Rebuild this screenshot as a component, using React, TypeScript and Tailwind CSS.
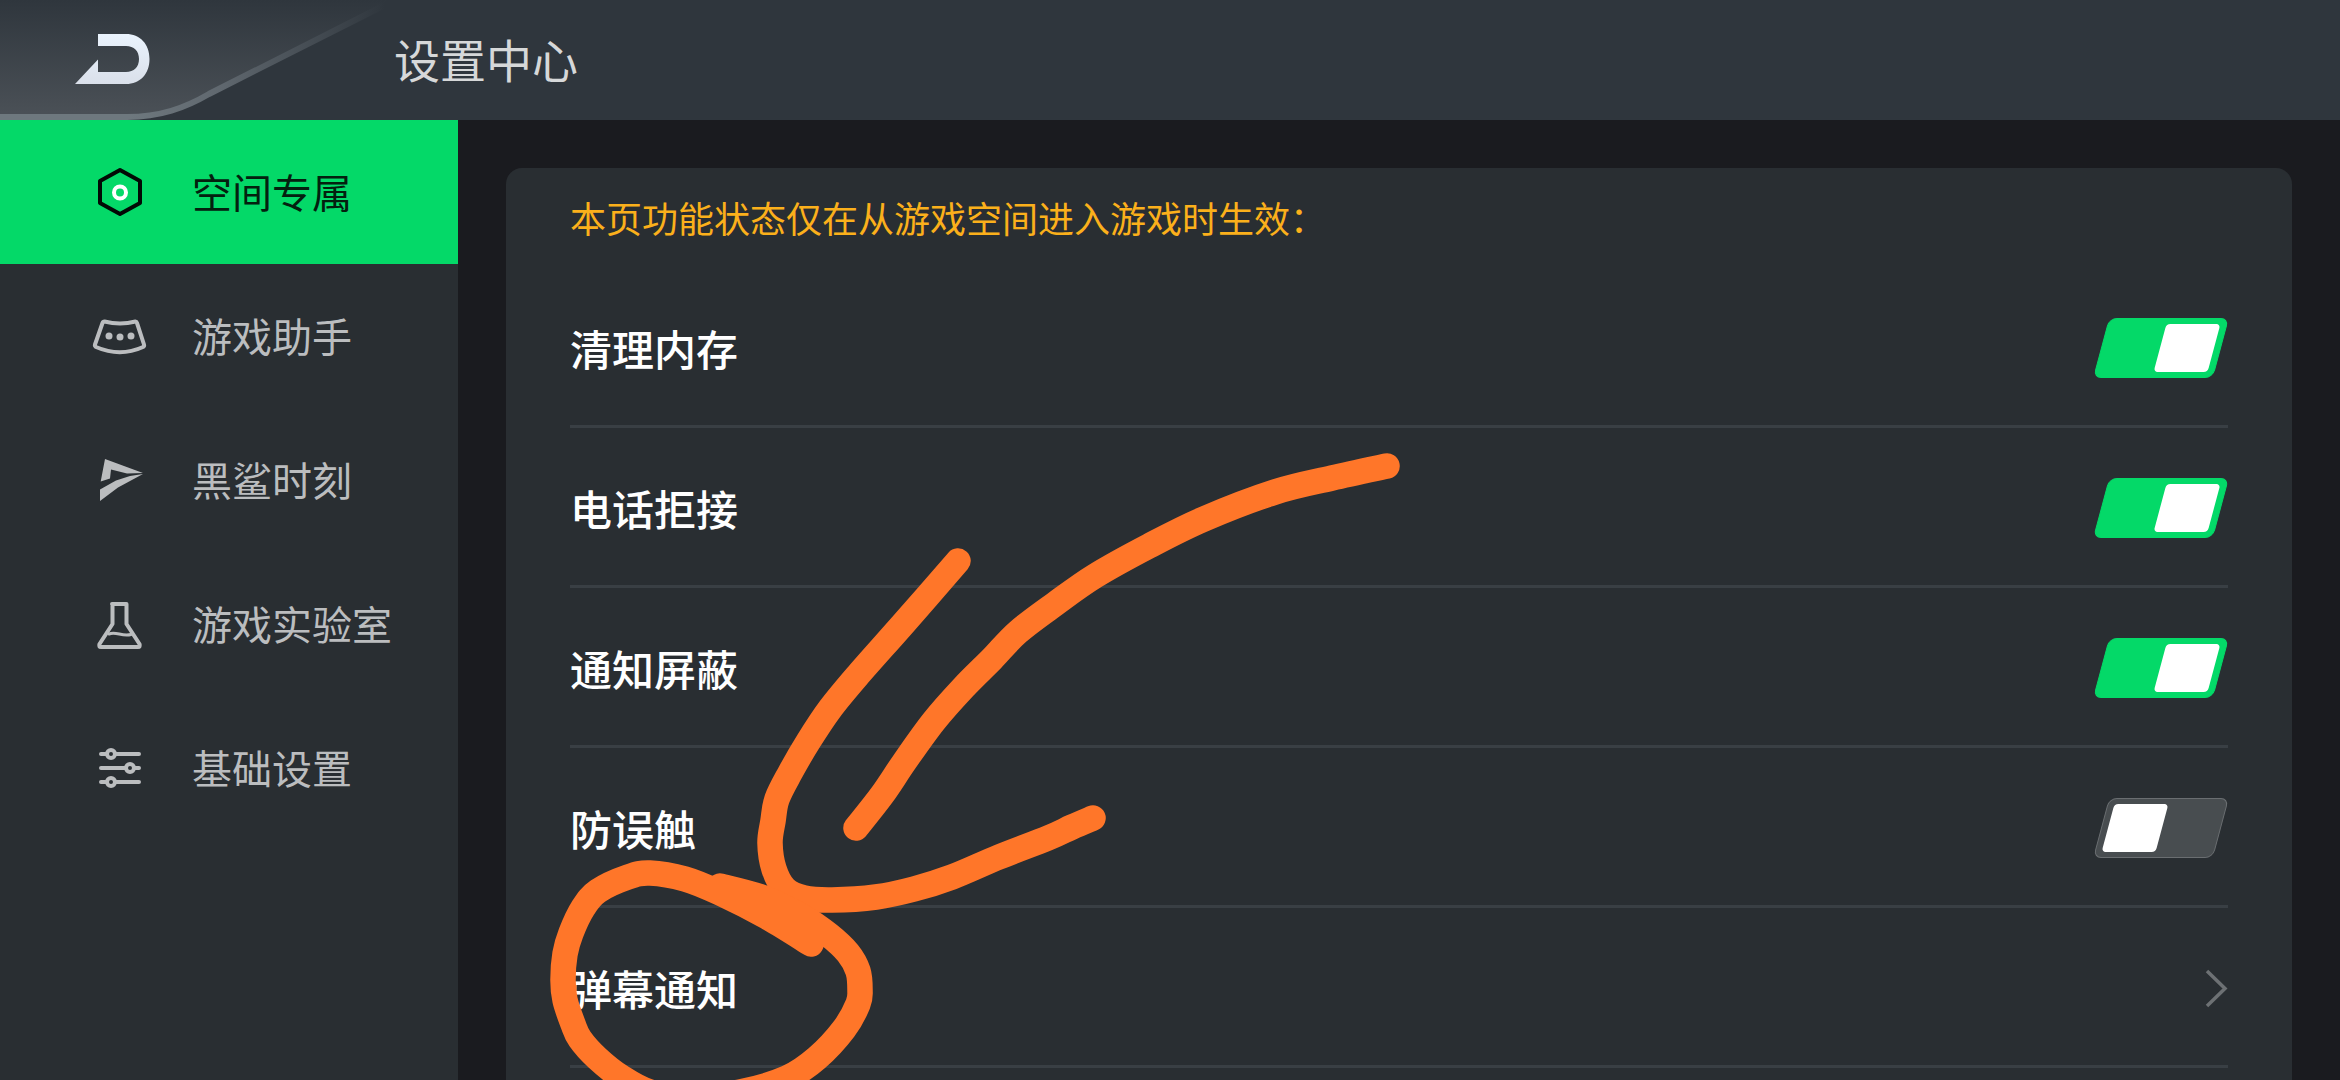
import { useState } from "react";
import type { ReactNode } from "react";

function LogoMark() {
  return (
    <svg className="block h-[120px] w-[394px]" viewBox="0 0 394 120" fill="none" aria-hidden="true">
      <defs>
        <linearGradient id="tab" x1="0" y1="0" x2="0" y2="1">
          <stop offset="0" stopColor="#2f363d" />
          <stop offset="1" stopColor="#4b5157" />
        </linearGradient>
        <linearGradient id="edge" gradientUnits="userSpaceOnUse" x1="130" y1="0" x2="385" y2="0">
          <stop offset="0" stopColor="#6e787e" />
          <stop offset="0.35" stopColor="#60686f" />
          <stop offset="1" stopColor="#2f363d" />
        </linearGradient>
        <linearGradient id="mark" x1="0" y1="0" x2="0" y2="1">
          <stop offset="0" stopColor="#eaf3fd" />
          <stop offset="1" stopColor="#dae0ea" />
        </linearGradient>
      </defs>
      <path d="M0 0H390L209 92C185 108 160 117 127 117H0Z" fill="url(#tab)" />
      <path d="M0 117H127C160 117 185 108 209 94L385 5" stroke="url(#edge)" strokeWidth="6" />
      <path
        d="M98 34H126C140 34 149.5 44 149.5 59S140 84 126 84H75L98 59.5V72H126C134 72 139 67 139 59S134 46 126 46H98Z"
        fill="url(#mark)"
      />
    </svg>
  );
}

function HexIcon() {
  return (
    <svg className="size-14" viewBox="0 0 56 56" fill="none" aria-hidden="true">
      <path d="M28 6L48 17V39L28 50L8 39V17Z" stroke="#020a05" strokeWidth="4" strokeLinejoin="round" />
      <circle cx="28" cy="28.500" r="6" stroke="#fff" strokeWidth="4" />
    </svg>
  );
}

function HelperIcon() {
  return (
    <svg className="size-14" viewBox="0 0 56 56" fill="none" aria-hidden="true">
      <path
        d="M12.500 13.500Q28 17.500 43.500 13.500Q44.500 13.500 45 15L52 36.500Q52.500 38 51 39Q28 49.500 4 39Q2.500 38 3 36.500L10.500 15Q11 13.500 12.500 13.500Z"
        stroke="currentColor"
        strokeWidth="4"
        strokeLinejoin="round"
      />
      <circle cx="17" cy="28" r="3.500" fill="currentColor" />
      <circle cx="28" cy="29" r="3.500" fill="currentColor" />
      <circle cx="39" cy="28" r="3.500" fill="currentColor" />
    </svg>
  );
}

function MomentIcon() {
  return (
    <svg className="size-14" viewBox="0 0 56 56" fill="currentColor" aria-hidden="true">
      <path d="M13 7L51 21L35 21.500L19 17.500L18 26.500L8.700 29.500Z" />
      <path d="M51 22L26 35.500L8 49V37.500L24 28.500L38 24Z" />
    </svg>
  );
}

function LabIcon() {
  return (
    <svg
      className="size-14"
      viewBox="0 0 56 56"
      fill="none"
      stroke="currentColor"
      strokeWidth="4"
      strokeLinecap="round"
      strokeLinejoin="round"
      aria-hidden="true"
    >
      <path d="M20 8H34.500V28L47.500 48Q48.500 51 46 51H9Q6.500 51 7.500 48L20.500 28V8" />
      <path d="M17 38C24 35 30 41 39 38.500" strokeWidth="3" />
    </svg>
  );
}

function SlidersIcon() {
  return (
    <svg
      className="size-14"
      viewBox="0 0 56 56"
      fill="none"
      stroke="currentColor"
      strokeWidth="4"
      strokeLinecap="round"
      aria-hidden="true"
    >
      <path d="M9 14H14M24 14H47M9 28H33M43 28H47M9 42H14M24 42H47" />
      <circle cx="19" cy="14" r="4" />
      <circle cx="38" cy="28" r="4" />
      <circle cx="19" cy="42" r="4" />
    </svg>
  );
}

const sections: { label: string; icon: ReactNode }[] = [
  { label: "空间专属", icon: <HexIcon /> },
  { label: "游戏助手", icon: <HelperIcon /> },
  { label: "黑鲨时刻", icon: <MomentIcon /> },
  { label: "游戏实验室", icon: <LabIcon /> },
  { label: "基础设置", icon: <SlidersIcon /> },
];

function SwitchRow({ label, initial }: { label: string; initial: boolean }) {
  const [on, setOn] = useState(initial);
  return (
    <label className="flex h-40 cursor-pointer items-center justify-between border-b-[3px] border-[#393f44] pt-[3px]">
      <span>{label}</span>
      <span className="relative block h-[60px] w-[134px] px-[7px]">
        <input
          type="checkbox"
          role="switch"
          className="peer sr-only"
          checked={on}
          onChange={(e) => setOn(e.target.checked)}
        />
        <span className="flex h-full -skew-x-15 items-center justify-start rounded-lg border border-[#6a6e71] bg-[#484d50] px-[6px] peer-checked:justify-end peer-checked:border-[#04d968] peer-checked:bg-[#04d968]">
          <span className="h-12 w-[54px] rounded bg-white" />
        </span>
      </span>
    </label>
  );
}

type Point = [number, number];

// Joins hand-drawn sample points with Catmull-Rom segments.
function smooth(points: Point[]) {
  let d = `M${points[0][0]} ${points[0][1]}`;
  for (let i = 0; i < points.length - 1; i++) {
    const p0 = points[Math.max(i - 1, 0)];
    const p1 = points[i];
    const p2 = points[i + 1];
    const p3 = points[Math.min(i + 2, points.length - 1)];
    d += `C${p1[0] + (p2[0] - p0[0]) / 6} ${p1[1] + (p2[1] - p0[1]) / 6} ${p2[0] - (p3[0] - p1[0]) / 6} ${p2[1] - (p3[1] - p1[1]) / 6} ${p2[0]} ${p2[1]}`;
  }
  return d;
}

const strokes: Point[][] = [
  [
    [1387, 466], [1332, 478], [1275, 492], [1204, 519], [1149, 546], [1095, 576], [1055, 604],
    [1018, 632], [992, 659], [964, 687], [934, 721], [905, 761], [882, 795], [856, 828],
  ],
  [
    [958, 561], [904, 623], [858, 675], [830, 709], [808, 742], [790, 773], [777, 799],
    [773, 821], [770, 843], [774, 869], [785, 889], [804, 898], [832, 900], [876, 897],
    [914, 889], [952, 877], [999, 857], [1048, 838], [1072, 827], [1093, 818],
  ],
  [
    [811, 944], [767, 917], [720, 893], [685, 879], [650, 873], [628, 877], [598, 891],
    [583, 908], [571, 933], [565, 954], [563, 980], [565, 1000], [573, 1024], [580, 1039],
    [597, 1058], [621, 1077], [650, 1092], [690, 1097], [740, 1092], [787, 1078],
    [817, 1058], [844, 1029], [858, 1004], [860, 990], [858, 971], [848, 953],
    [829, 935], [803, 917], [764, 898], [720, 886],
  ],
];

function Scribble() {
  return (
    <svg
      className="pointer-events-none absolute top-0 left-0 h-[1080px] w-[2340px]"
      viewBox="0 0 2340 1080"
      fill="none"
      stroke="#ff7629"
      strokeWidth="25.500"
      strokeLinecap="round"
      strokeLinejoin="round"
      aria-hidden="true"
    >
      {strokes.map((points, i) => (
        <path key={i} d={smooth(points)} />
      ))}
    </svg>
  );
}

export default function App() {
  const [active, setActive] = useState(0);
  return (
    <div className="relative flex h-screen min-h-[720px] flex-col overflow-hidden bg-[#1a1b1f] font-['Noto_Sans_CJK_SC',sans-serif] text-white">
      <header className="flex h-[120px] shrink-0 items-center bg-[#2f363d]">
        <button type="button" aria-label="返回">
          <LogoMark />
        </button>
        <h1 className="pb-1 text-[46px] leading-none text-[#d6d8d9]">设置中心</h1>
      </header>

      <div className="flex min-h-0 flex-1">
        <nav className="w-[458px] shrink-0 bg-[#292e32]">
          {sections.map((s, i) => (
            <button
              key={s.label}
              type="button"
              aria-current={i === active ? "page" : undefined}
              onClick={() => setActive(i)}
              className={
                i === active
                  ? "flex h-36 w-full items-center gap-11 bg-[#04d968] pl-[92px] text-[40px] leading-none text-[#04200f]"
                  : "flex h-36 w-full items-center gap-11 pl-[92px] text-[40px] leading-none text-[#bbbdbf]"
              }
            >
              {s.icon}
              <span className="pb-0.5">{s.label}</span>
            </button>
          ))}
        </nav>

        <main className="min-w-0 flex-1 overflow-hidden px-12 pt-12">
          <section className="min-h-full rounded-t-2xl bg-[#292e32] px-16 text-[42px] leading-none font-medium">
            <p className="flex h-[100px] items-center pb-0.5 text-4xl leading-none font-normal text-[#fbb01b]">
              本页功能状态仅在从游戏空间进入游戏时生效：
            </p>
            <SwitchRow label="清理内存" initial={true} />
            <SwitchRow label="电话拒接" initial={true} />
            <SwitchRow label="通知屏蔽" initial={true} />
            <SwitchRow label="防误触" initial={false} />
            <a
              href="#danmaku"
              className="flex h-40 items-center justify-between border-b-[3px] border-[#393f44] pt-[3px]"
            >
              <span>弹幕通知</span>
              <svg className="h-10 w-6" viewBox="0 0 24 40" fill="none" aria-hidden="true">
                <path d="M3 3L21 20.500L3 38" stroke="#6d7174" strokeWidth="3.500" />
              </svg>
            </a>
          </section>
        </main>
      </div>

      <Scribble />
    </div>
  );
}
